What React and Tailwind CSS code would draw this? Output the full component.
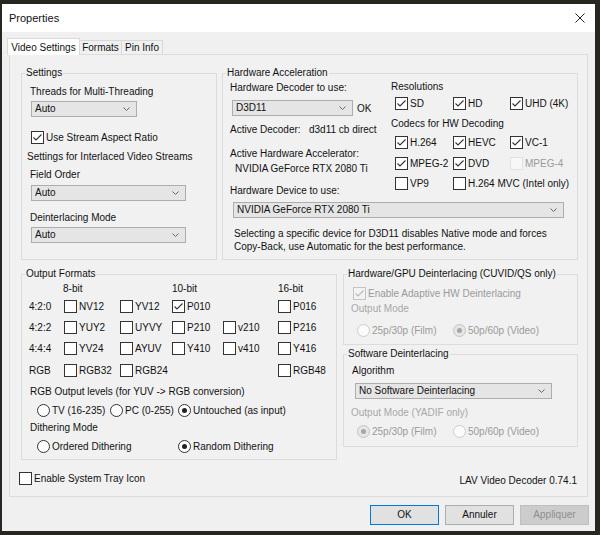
import React from 'react';

const Check = ({ checked, disabled, faint }) => (
  <span
    className={`w-[13px] h-[13px] shrink-0 border flex items-center justify-center ${
      faint ? 'border-[#e2e2e2] bg-[#f7f7f7]' : disabled ? 'border-[#c4c4c4] bg-[#f3f3f3]' : 'border-[#333333] bg-white'
    }`}
  >
    {checked && (
      <svg width="11" height="11" viewBox="0 0 11 11">
        <path d="M1.5 5.5 L4 8 L9.5 2.5" fill="none" stroke={disabled ? '#b8b8b8' : '#333333'} strokeWidth="1.1" />
      </svg>
    )}
  </span>
);

const Radio = ({ on, disabled }) => (
  <span
    className={`w-[13px] h-[13px] shrink-0 rounded-full border flex items-center justify-center ${
      disabled ? (on ? 'border-[#c4c4c4] bg-[#e6e6e6]' : 'border-[#cccccc] bg-[#fbfbfb]') : 'border-[#333333] bg-white'
    }`}
  >
    {on && <span className={`w-[5px] h-[5px] rounded-full ${disabled ? 'bg-[#a6a6a6]' : 'bg-[#222222]'}`} />}
  </span>
);

const CheckItem = ({ label, checked, disabled, faint, className = '' }) => (
  <div className={`flex items-center gap-[2px] h-[13px] ${className}`}>
    <Check checked={checked} disabled={disabled} faint={faint} />
    <span className={`leading-[12px] whitespace-nowrap ${disabled || faint ? 'text-[#9a9a9a]' : ''}`}>{label}</span>
  </div>
);

const RadioItem = ({ label, on, disabled, className = '' }) => (
  <div className={`flex items-center gap-[2px] h-[13px] ${className}`}>
    <Radio on={on} disabled={disabled} />
    <span className={`leading-[12px] whitespace-nowrap ${disabled ? 'text-[#9a9a9a]' : ''}`}>{label}</span>
  </div>
);

const Select = ({ value, w }) => (
  <div className={`${w} h-[16px] border border-[#adadad] bg-[#e5e5e5] flex items-center justify-between pl-[3px] pr-[6px]`}>
    <span className="leading-[12px] whitespace-nowrap">{value}</span>
    <svg width="7" height="4" viewBox="0 0 7 4">
      <path d="M0.5 0.5 L3.5 3.5 L6.5 0.5" fill="none" stroke="#666666" strokeWidth="1" />
    </svg>
  </div>
);

const Group = ({ title, className, children }) => (
  <fieldset className={`border border-[#dcdcdc] min-w-0 ${className}`}>
    <legend className="ml-[3px] px-[1px] leading-[12px]">{title}</legend>
    {children}
  </fieldset>
);

const Line = ({ className = '', children }) => (
  <div className={`leading-[12px] whitespace-nowrap ${className}`}>{children}</div>
);

const fmtRows = [
  ['4:2:0', [['NV12', false], ['YV12', false], ['P010', true], null, ['P016', false]]],
  ['4:2:2', [['YUY2', false], ['UYVY', false], ['P210', false], ['v210', false], ['P216', false]]],
  ['4:4:4', [['YV24', false], ['AYUV', false], ['Y410', false], ['v410', false], ['Y416', false]]],
  ['RGB', [['RGB32', false], ['RGB24', false], null, null, ['RGB48', false]]],
];
const colW = ['w-[56px]', 'w-[52px]', 'w-[51px]', 'w-[55px]', 'w-[50px]'];
const rowMt = ['mt-[5px]', 'mt-[8px]', 'mt-[8px]', 'mt-[9px]'];

export default function App() {
  return (
    <div className="w-[600px] h-[535px] bg-[#27261f] pt-[4px] pl-[2px] text-[10px] text-[#111111] font-['Liberation_Sans',Arial,sans-serif]">
      <div className="w-[593px] h-[527px] bg-[#f0f0f0] flex flex-col">
        {/* title bar */}
        <div className="h-[28px] bg-white flex items-center justify-between pl-[7px] pr-[10px] shrink-0">
          <span className="text-[11px] leading-[14px]">Properties</span>
          <svg width="10" height="10" viewBox="0 0 10 10">
            <path d="M0.5 0.5 L9.5 9.5 M9.5 0.5 L0.5 9.5" stroke="#222222" strokeWidth="1" />
          </svg>
        </div>

        {/* tabs */}
        <div className="mt-[6px] ml-[5px] flex items-end h-[16px]">
          <div className="relative z-10 -mb-[1px] h-[17px] w-[73px] bg-white border border-b-0 border-[#d9d9d9] flex items-center justify-center">
            Video Settings
          </div>
          <div className="h-[14px] w-[42px] border border-b-0 border-l-0 border-[#d9d9d9] flex items-center justify-center">
            Formats
          </div>
          <div className="h-[14px] w-[41px] border border-b-0 border-l-0 border-[#d9d9d9] flex items-center justify-center">
            Pin Info
          </div>
        </div>

        {/* panel */}
        <div className="ml-[7px] w-[579px] h-[443px] border border-[#dcdcdc] bg-[#f1f1f1] shrink-0">
          <div className="mt-[12px] ml-[11px] flex gap-[5px]">
            <Group title="Settings" className="w-[196px] h-[193px]">
              <Line className="mt-[7px] ml-[8px]">Threads for Multi-Threading</Line>
              <div className="mt-[3px] ml-[9px]">
                <Select w="w-[106px]" value="Auto" />
              </div>
              <CheckItem className="mt-[14px] ml-[9px]" label="Use Stream Aspect Ratio" checked />
              <Line className="mt-[7px] ml-[5px]">Settings for Interlaced Video Streams</Line>
              <Line className="mt-[6px] ml-[8px]">Field Order</Line>
              <div className="mt-[4px] ml-[9px]">
                <Select w="w-[155px]" value="Auto" />
              </div>
              <Line className="mt-[11px] ml-[8px]">Deinterlacing Mode</Line>
              <div className="mt-[3px] ml-[9px]">
                <Select w="w-[155px]" value="Auto" />
              </div>
            </Group>

            <Group title="Hardware Acceleration" className="w-[356px] h-[193px]">
              <div className="flex">
                <div className="w-[168px] shrink-0">
                  <Line className="mt-[3px] ml-[7px]">Hardware Decoder to use:</Line>
                  <div className="mt-[6px] ml-[9px] flex items-end gap-[4px]">
                    <Select w="w-[121px]" value="D3D11" />
                    <span className="leading-[12px] mb-[1px]">OK</span>
                  </div>
                  <div className="mt-[8px] ml-[7px] flex leading-[12px] whitespace-nowrap">
                    <span className="w-[79px]">Active Decoder:</span>
                    <span>d3d11 cb direct</span>
                  </div>
                  <Line className="mt-[12px] ml-[7px]">Active Hardware Accelerator:</Line>
                  <Line className="mt-[3px] ml-[12px]">NVIDIA GeForce RTX 2080 Ti</Line>
                  <Line className="mt-[10px] ml-[7px]">Hardware Device to use:</Line>
                </div>
                <div>
                  <Line className="mt-[2px]">Resolutions</Line>
                  <div className="mt-[4px] ml-[4px] flex">
                    <CheckItem className="w-[58px]" label="SD" checked />
                    <CheckItem className="w-[57px]" label="HD" checked />
                    <CheckItem label="UHD (4K)" checked />
                  </div>
                  <Line className="mt-[8px]">Codecs for HW Decoding</Line>
                  <div className="mt-[6px] ml-[4px] flex">
                    <CheckItem className="w-[58px]" label="H.264" checked />
                    <CheckItem className="w-[57px]" label="HEVC" checked />
                    <CheckItem label="VC-1" checked />
                  </div>
                  <div className="mt-[8px] ml-[4px] flex">
                    <CheckItem className="w-[58px]" label="MPEG-2" checked />
                    <CheckItem className="w-[57px]" label="DVD" checked />
                    <CheckItem label="MPEG-4" faint />
                  </div>
                  <div className="mt-[7px] ml-[4px] flex">
                    <CheckItem className="w-[58px]" label="VP9" />
                    <CheckItem label="H.264 MVC (Intel only)" />
                  </div>
                </div>
              </div>
              <div className="mt-[5px] ml-[10px]">
                <Select w="w-[331px]" value="NVIDIA GeForce RTX 2080 Ti" />
              </div>
              <div className="mt-[9px] ml-[11px] leading-[13px]">
                Selecting a specific device for D3D11 disables Native mode and forces
                <br />
                Copy-Back, use Automatic for the best performance.
              </div>
            </Group>
          </div>

          <div className="mt-[8px] ml-[11px] flex gap-[6px]">
            <Group title="Output Formats" className="w-[316px] h-[192px]">
              <div className="mt-[3px] ml-[7px] flex leading-[12px]">
                <span className="w-[34px]" />
                <span className="w-[109px]">8-bit</span>
                <span className="w-[106px]">10-bit</span>
                <span>16-bit</span>
              </div>
              {fmtRows.map(([label, cells], i) => (
                <div key={label} className={`${rowMt[i]} ml-[7px] flex items-center h-[13px]`}>
                  <span className="w-[35px] leading-[12px]">{label}</span>
                  {cells.map((c, j) => (
                    <div key={j} className={colW[j]}>
                      {c && <CheckItem label={c[0]} checked={c[1]} />}
                    </div>
                  ))}
                </div>
              ))}
              <Line className="mt-[9px] ml-[8px]">RGB Output levels (for YUV -&gt; RGB conversion)</Line>
              <div className="mt-[6px] ml-[15px] flex">
                <RadioItem className="w-[73px]" label="TV (16-235)" />
                <RadioItem className="w-[68px]" label="PC (0-255)" />
                <RadioItem label="Untouched (as input)" on />
              </div>
              <Line className="mt-[5px] ml-[8px]">Dithering Mode</Line>
              <div className="mt-[6px] ml-[15px] flex">
                <RadioItem className="w-[141px]" label="Ordered Dithering" />
                <RadioItem label="Random Dithering" on />
              </div>
            </Group>

            <div className="w-[235px]">
              <Group title="Hardware/GPU Deinterlacing (CUVID/QS only)" className="w-[235px] h-[77px]">
                <CheckItem className="mt-[7px] ml-[9px]" label="Enable Adaptive HW Deinterlacing" checked disabled />
                <Line className="mt-[3px] ml-[7px] text-[#a8a8a8]">Output Mode</Line>
                <div className="mt-[9px] ml-[13px] flex">
                  <RadioItem className="w-[96px]" label="25p/30p (Film)" disabled />
                  <RadioItem label="50p/60p (Video)" on disabled />
                </div>
              </Group>
              <Group title="Software Deinterlacing" className="mt-[3px] w-[235px] h-[99px]">
                <Line className="mt-[5px] ml-[8px]">Algorithm</Line>
                <div className="mt-[6px] ml-[11px]">
                  <Select w="w-[197px]" value="No Software Deinterlacing" />
                </div>
                <Line className="mt-[8px] ml-[7px] text-[#a8a8a8]">Output Mode (YADIF only)</Line>
                <div className="mt-[6px] ml-[13px] flex">
                  <RadioItem className="w-[96px]" label="25p/30p (Film)" on disabled />
                  <RadioItem label="50p/60p (Video)" disabled />
                </div>
              </Group>
            </div>
          </div>

          <div className="mt-[12px] ml-[9px] mr-[10px] flex items-start justify-between">
            <CheckItem label="Enable System Tray Icon" />
            <span className="mt-[3px] leading-[12px]">LAV Video Decoder 0.74.1</span>
          </div>
        </div>

        {/* buttons */}
        <div className="mt-[8px] pr-[6px] flex justify-end gap-[6px]">
          <button className="w-[69px] h-[20px] border border-[#0078d7] bg-[#e1e1e1] leading-[12px]">OK</button>
          <button className="w-[69px] h-[20px] border border-[#adadad] bg-[#e1e1e1] leading-[12px]">Annuler</button>
          <button className="w-[69px] h-[20px] border border-[#bfbfbf] bg-[#cccccc] text-[#8f8f8f] leading-[12px]">Appliquer</button>
        </div>
      </div>
    </div>
  );
}
